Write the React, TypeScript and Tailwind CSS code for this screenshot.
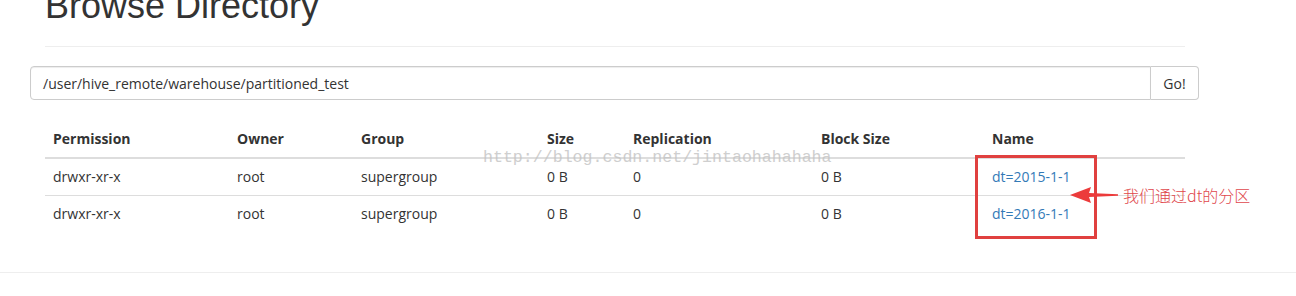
import React from "react";

const rows = [
  { perm: "drwxr-xr-x", owner: "root", group: "supergroup", size: "0 B", rep: "0", block: "0 B", name: "dt=2015-1-1" },
  { perm: "drwxr-xr-x", owner: "root", group: "supergroup", size: "0 B", rep: "0", block: "0 B", name: "dt=2016-1-1" },
];

const headers = ["Permission", "Owner", "Group", "Size", "Replication", "Block Size", "Name"];

export default function App() {
  return (
    <div
      className="relative w-[1296px] h-[296px] overflow-hidden bg-white text-[#333] text-[14px]"
      style={{ fontFamily: '"Open Sans", "Noto Sans", sans-serif' }}
    >
      <div className="px-[45px] w-[1230px]">
        <div className="mt-[-14px] h-[61px] border-b border-[#eee]">
          <h1
            className="text-[36px] leading-[40px] font-normal text-[#333]"
            style={{ fontFamily: '"Liberation Sans", Arial, sans-serif' }}
          >
            Browse Directory
          </h1>
        </div>
      </div>

      <div className="mt-[19px] ml-[30px] flex w-[1169px] h-[34px]">
        <div className="flex-1 flex items-center border border-[#ccc] rounded-l-[4px] px-[12px] shadow-[inset_0_1px_1px_rgba(0,0,0,0.075)]">
          /user/hive_remote/warehouse/partitioned_test
        </div>
        <div className="w-[48px] flex items-center justify-center border border-l-0 border-[#ccc] rounded-r-[4px] bg-white">
          Go!
        </div>
      </div>

      <div className="mt-[21px] ml-[45px] w-[1140px]">
        <div className="grid grid-cols-[184px_124px_186px_86px_188px_171px_201px] border-b-2 border-[#ddd]">
          {headers.map((h) => (
            <div key={h} className="px-[8px] py-[8px] leading-[20px] font-bold">
              {h}
            </div>
          ))}
        </div>
        {rows.map((r, i) => (
          <div
            key={i}
            className={`grid grid-cols-[184px_124px_186px_86px_188px_171px_201px] ${i > 0 ? "border-t border-[#ddd]" : ""}`}
          >
            <div className="p-[8px] leading-[20px]">{r.perm}</div>
            <div className="p-[8px] leading-[20px]">{r.owner}</div>
            <div className="p-[8px] leading-[20px]">{r.group}</div>
            <div className="p-[8px] leading-[20px]">{r.size}</div>
            <div className="p-[8px] leading-[20px]">{r.rep}</div>
            <div className="p-[8px] leading-[20px]">{r.block}</div>
            <div className="p-[8px] leading-[20px]">
              <a className="text-[#337ab7]">{r.name}</a>
            </div>
          </div>
        ))}
      </div>

      <div className="mt-[40px] border-t border-[#eee] w-full" />

      {/* watermark */}
      <div
        className="absolute left-[483px] top-[147px] text-[16.6px] leading-[22px] text-[#c4c4c4] opacity-80 whitespace-nowrap pointer-events-none"
        style={{ fontFamily: '"Liberation Mono", "Courier New", monospace' }}
      >
        http://blog.csdn.net/jintaohahahaha
      </div>

      {/* annotation box */}
      <div className="absolute left-[975px] top-[155px] w-[122px] h-[84px] border-[3px] border-[#e0403f] pointer-events-none" />

      {/* arrow */}
      <svg className="absolute left-[1068px] top-[186px]" width="52" height="18" viewBox="0 0 52 18">
        <path d="M2 9 L23 1 L21 7 L50 8.2 L50 9.8 L21 11 L23 17 Z" fill="#ec3b3b" />
      </svg>

      <div
        className="absolute left-[1123px] top-[184px] text-[16px] leading-[22px] text-[#e0474c] whitespace-nowrap"
        style={{ fontFamily: '"Noto Sans CJK SC", "Noto Sans", sans-serif', fontWeight: 300 }}
      >
        我们通过dt的分区
      </div>
    </div>
  );
}
